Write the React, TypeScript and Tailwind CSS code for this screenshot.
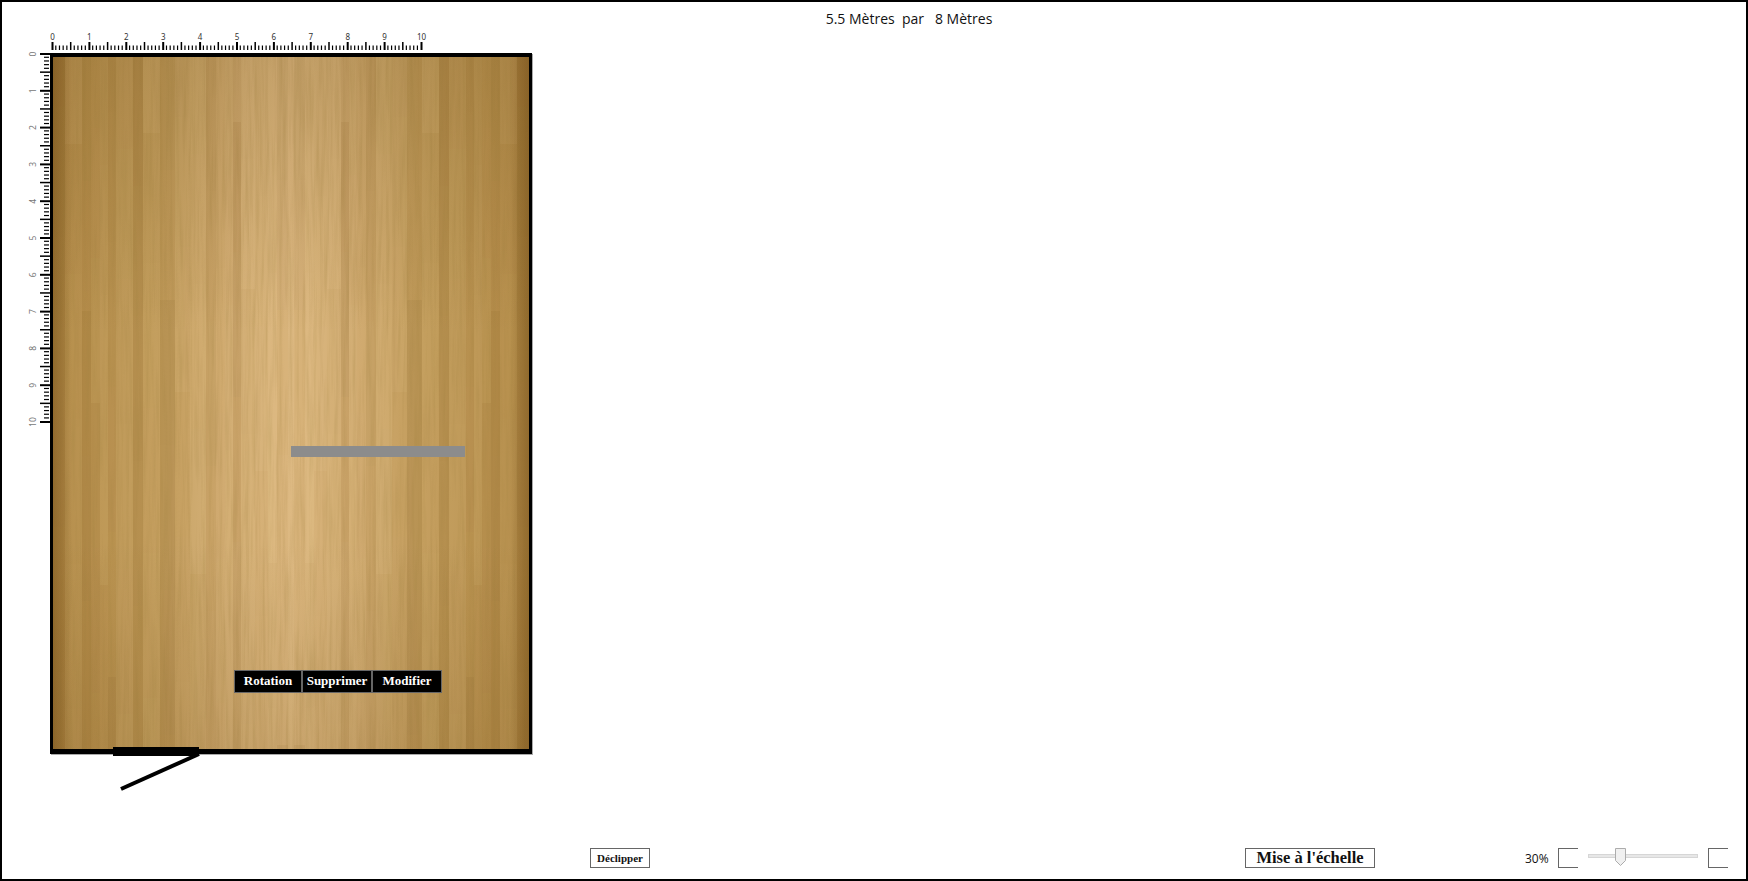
import { useMemo } from "react";

// plank edges from the left wall to the middle of the room, the texture is mirrored
const PLANK_EDGES = [0, 12, 29, 38, 47, 55, 63, 80, 90, 107, 122, 137, 153, 163, 172, 180, 188, 202, 215, 224, 235, 238];
const PLANK_SHADE = [-0.1, 0.06, -0.08, -0.01, 0.05, -0.06, 0.07, -0.1, 0.08, -0.09, 0.04, 0.09, -0.07, 0.03, 0.09, -0.08, 0.08, 0.03, 0.08, -0.04, 0.05];
const PLANK_BREAKS = [95, 225, 370, 515, 660];

const SERIF = "font-['Liberation_Serif',serif]";

function shadeOf(i: number, y: number) {
  const row = PLANK_BREAKS.findIndex((b) => y < b + ((i * 37) % 90) - 45);
  const r = row === -1 ? PLANK_BREAKS.length : row;
  return PLANK_SHADE[i] + (((i * 13 + r * 29) % 7) - 3) * 0.012;
}

function WoodFloor() {
  const strips = useMemo(() => {
    const out: { x: number; w: number; y: number; h: number; shade: number }[] = [];
    PLANK_EDGES.slice(0, -1).forEach((x, i) => {
      const w = PLANK_EDGES[i + 1] - x;
      const cuts = [0, ...PLANK_BREAKS.map((b) => b + ((i * 37) % 90) - 45), 692];
      cuts.slice(0, -1).forEach((y, j) => {
        const h = cuts[j + 1] - y;
        out.push({ x, w, y, h, shade: shadeOf(i, y + 1) });
        out.push({ x: 476 - x - w, w, y, h, shade: shadeOf(i, y + 1) });
      });
    });
    return out;
  }, []);

  return (
    <svg className="absolute inset-0 block" width="476" height="692" viewBox="0 0 476 692">
      <defs>
        <linearGradient id="woodH" x1="0" x2="1" y1="0" y2="0">
          <stop offset="0" stopColor="#b38b48" />
          <stop offset="0.2" stopColor="#c09a58" />
          <stop offset="0.35" stopColor="#cfa96e" />
          <stop offset="0.5" stopColor="#dcb77f" />
          <stop offset="0.65" stopColor="#cfa96e" />
          <stop offset="0.8" stopColor="#c09a58" />
          <stop offset="1" stopColor="#b38b48" />
        </linearGradient>
        <linearGradient id="woodV" x1="0" x2="0" y1="0" y2="1">
          <stop offset="0" stopColor="#5f3f0c" stopOpacity="0.18" />
          <stop offset="0.4" stopColor="#5f3f0c" stopOpacity="0" />
          <stop offset="0.7" stopColor="#5f3f0c" stopOpacity="0" />
          <stop offset="1" stopColor="#5f3f0c" stopOpacity="0.14" />
        </linearGradient>
        <linearGradient id="wallShade" x1="0" x2="1" y1="0" y2="0">
          <stop offset="0" stopColor="#6b4510" stopOpacity="0.4" />
          <stop offset="0.04" stopColor="#6b4510" stopOpacity="0" />
          <stop offset="0.96" stopColor="#6b4510" stopOpacity="0" />
          <stop offset="1" stopColor="#6b4510" stopOpacity="0.4" />
        </linearGradient>
        <filter id="grain" x="0" y="0" width="100%" height="100%">
          <feTurbulence type="fractalNoise" baseFrequency="0.3 0.012" numOctaves="3" seed="4" />
          <feColorMatrix values="0 0 0 0 0.35  0 0 0 0 0.22  0 0 0 0 0.05  1.4 0 0 0 -0.55" />
        </filter>
      </defs>
      <rect width="476" height="692" fill="url(#woodH)" />
      {strips.map((s, i) => (
        <rect
          key={i}
          x={s.x}
          y={s.y}
          width={s.w}
          height={s.h}
          fill={s.shade < 0 ? "#6b4510" : "#f3d9a8"}
          opacity={Math.abs(s.shade)}
        />
      ))}
      <rect width="476" height="692" filter="url(#grain)" opacity="0.35" />
      <rect width="476" height="692" fill="url(#woodV)" />
      <rect width="476" height="692" fill="url(#wallShade)" />
    </svg>
  );
}

function RulerTop() {
  const ticks = Array.from({ length: 101 }, (_, i) => i);
  return (
    <svg className="absolute left-[47px] top-[2px] block" width="390" height="20" viewBox="0 0 390 20">
      {ticks.map((i) => {
        const x = 3 + i * 3.69;
        const major = i % 5 === 0;
        return <rect key={i} x={x - 0.5} y={major ? 12 : 15.5} width={i % 10 === 0 ? 2 : major ? 1.5 : 1.2} height={major ? 8 : 4.5} fill="#000" />;
      })}
      {Array.from({ length: 11 }, (_, i) => (
        <text key={i} x={3.5 + i * 36.9} y={9.5} fontSize="8" textAnchor="middle" fill="#333" fontFamily="'Noto Sans', sans-serif">
          {i}
        </text>
      ))}
    </svg>
  );
}

function RulerLeft() {
  const ticks = Array.from({ length: 101 }, (_, i) => i);
  return (
    <svg className="absolute left-[26px] top-[23px] block" width="22" height="375" viewBox="0 0 22 375">
      {ticks.map((i) => {
        const y = 2.5 + i * 3.68;
        const major = i % 5 === 0;
        return <rect key={i} x={major ? 12 : 16} y={y - 0.5} width={major ? 10 : 5} height={i % 10 === 0 ? 2 : major ? 1.5 : 1.2} fill="#000" />;
      })}
      {Array.from({ length: 11 }, (_, i) => (
        <text
          key={i}
          x={5}
          y={3 + i * 36.8}
          fontSize="8.5"
          textAnchor="middle"
          fill="#777"
          fontFamily="'Noto Sans', sans-serif"
          transform={`rotate(-90 5 ${3 + i * 36.8}) translate(0 3)`}
        >
          {i}
        </text>
      ))}
    </svg>
  );
}

function MenuButton({ label, width }: { label: string; width: string }) {
  return (
    <button type="button" className={`h-[23px] ${width} border border-[#666] bg-black pb-[2px] text-[13px] leading-none font-bold text-white ${SERIF}`}>
      {label}
    </button>
  );
}

export default function App() {
  return (
    <div className="flex h-[881px] w-[1748px] flex-col overflow-hidden border-2 border-black bg-white font-['Open_Sans',sans-serif] text-[#111]">
      {/* Room size */}
      <header className="flex h-[26px] shrink-0 items-end justify-center pl-[70px]">
        <span className="relative top-[1px] text-[14px] leading-[20px] whitespace-pre">5.5 Mètres  par   8 Mètres</span>
      </header>

      {/* Plan */}
      <main className="relative flex-1">
        <RulerTop />
        <RulerLeft />

        <div className="absolute left-[48px] top-[25px] h-[701px] w-[482px] border-x-[3px] border-t-4 border-b-[5px] border-black shadow-[1px_1px_0_#aaa]">
          <WoodFloor />
          <div className="absolute left-[238px] top-[389px] h-[11px] w-[174px] bg-[#8c8c8c]" />
          <div className="absolute left-[181px] top-[613px] flex">
            <MenuButton label="Rotation" width="w-[68px]" />
            <MenuButton label="Supprimer" width="w-[70px]" />
            <MenuButton label="Modifier" width="w-[70px]" />
          </div>
        </div>

        {/* Door */}
        <svg className="absolute left-[110px] top-[717px] block" width="92" height="48" viewBox="0 0 92 48">
          <rect x="1" y="2" width="86" height="9" fill="#000" />
          <path d="M87 9 L9 44" stroke="#000" strokeWidth="4" />
        </svg>
      </main>

      {/* Bottom controls */}
      <footer className="flex h-[31px] shrink-0 items-start">
        <button type="button" className={`ml-[588px] h-[20px] w-[60px] border border-[#666] text-[11px] leading-none font-bold ${SERIF}`}>
          Déclipper
        </button>
        <button type="button" className={`ml-[595px] h-[20px] w-[130px] border border-[#666] pt-[1px] text-[16.5px] leading-none font-bold ${SERIF}`}>
          Mise à l'échelle
        </button>
        <span className="ml-[150px] w-[33px] pt-[1px] text-[12px] leading-[20px]">30%</span>
        <div className="h-[20px] w-[20px] border-y border-l border-[#666]" />
        <div className="relative ml-[10px] h-[20px] w-[110px]">
          <div className="mt-[6px] h-[4px] w-full border border-[#d6d6d6] bg-[#e7e7e7]" />
          <svg className="absolute left-[27px] top-0 block" width="11" height="18" viewBox="0 0 11 18">
            <path d="M0.5 0.5 H10.5 V12.5 L5.5 17.5 L0.5 12.5 Z" fill="#f0f0f0" stroke="#acacac" />
          </svg>
        </div>
        <div className="ml-[10px] h-[20px] w-[20px] border-y border-l border-[#666]" />
      </footer>
    </div>
  );
}
